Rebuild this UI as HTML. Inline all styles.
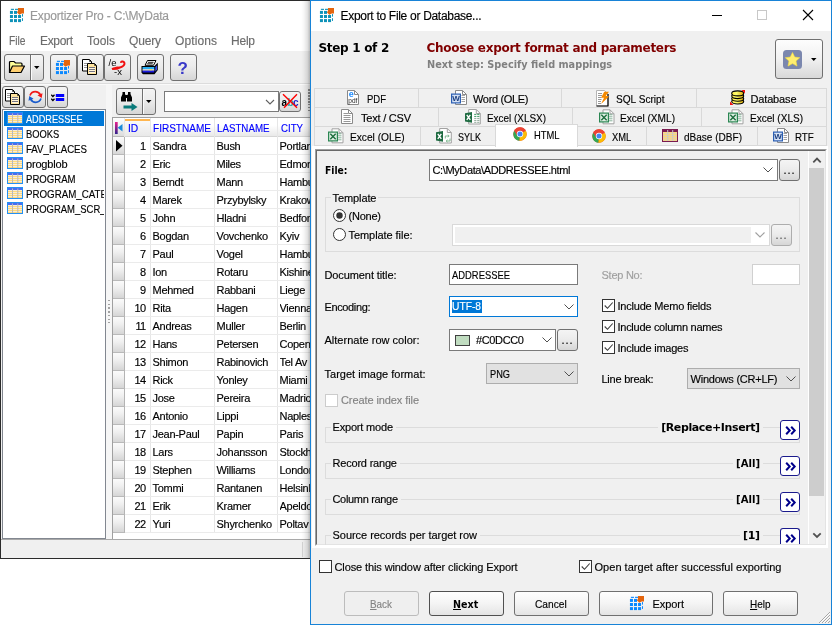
<!DOCTYPE html>
<html lang="en"><head><meta charset="utf-8"><title>Exportizer Pro - Export to File or Database</title>
<style>
html,body{margin:0;padding:0}
body{width:832px;height:625px;position:relative;overflow:hidden;background:#fff;font-family:"Liberation Sans",sans-serif;}
div,svg,span.t{position:absolute;box-sizing:border-box}
span.t{white-space:pre;display:block;-webkit-text-stroke:0.15px currentColor}
#root{left:0;top:0;width:832px;height:625px;will-change:transform;overflow:hidden}
.btn{border:1px solid #707070;border-radius:3px;background:linear-gradient(#f4f4f4,#ececec 45%,#d6d6d6 100%);}
.pbtn{border:1px solid #707070;border-radius:3px;background:linear-gradient(#fefefe,#f4f4f4 50%,#e4e4e4 100%);}
u{text-decoration:underline}
</style></head>
<body>
<div id="root">
<!-- main window -->
<div style="left:0px;top:0px;width:312px;height:559px;background:#f0f0f0;border:1px solid #2b2b2b;border-right:none;"></div>
<div style="left:1px;top:1px;width:311px;height:30px;background:#fff;"></div>
<div style="left:1px;top:31px;width:311px;height:20px;background:#fff;"></div>
<svg style="left:9px;top:8px;" width="15" height="15" viewBox="0 0 15 15"><rect x="0.95" y="2.90" width="3" height="3" fill="#0e92b8"/><rect x="5.00" y="2.90" width="3" height="3" fill="#0e92b8"/><rect x="0.95" y="7.00" width="3" height="3" fill="#0e92b8"/><rect x="5.00" y="7.00" width="3" height="3" fill="#0e92b8"/><rect x="9.05" y="7.00" width="3" height="3" fill="#0e92b8"/><rect x="0.95" y="11.10" width="3" height="3" fill="#0e92b8"/><rect x="5.00" y="11.10" width="3" height="3" fill="#0e92b8"/><rect x="9.05" y="11.10" width="3" height="3" fill="#0e92b8"/><rect x="1.900" y="0.800" width="3.100" height="1.100" fill="#0e92b8"/><rect x="6" y="0.800" width="3" height="1.100" fill="#0e92b8"/><rect x="13" y="6.100" width="1" height="2.500" fill="#0e92b8"/><rect x="13" y="10.200" width="1" height="2.700" fill="#0e92b8"/><path d="M9 0h6v5.400h-2.300l-2.300 1.400-2.400-2.400 1-1.900z" fill="#e4650e"/></svg>
<span id="t1" class="t" style="left:30px;top:7.84px;font-size:12px;line-height:16px;color:#999;font-weight:normal;letter-spacing:-0.175px;">Exportizer Pro - C:\MyData</span>
<span id="t2" class="t" style="left:8.5px;top:32.84px;font-size:12px;line-height:16px;color:#6d6d6d;font-weight:normal;letter-spacing:0.000px;transform:scaleX(0.8530);transform-origin:0 0;">File</span>
<span id="t3" class="t" style="left:40px;top:32.84px;font-size:12px;line-height:16px;color:#6d6d6d;font-weight:normal;letter-spacing:-0.338px;">Export</span>
<span id="t4" class="t" style="left:87px;top:32.84px;font-size:12px;line-height:16px;color:#6d6d6d;font-weight:normal;letter-spacing:-0.004px;">Tools</span>
<span id="t5" class="t" style="left:129px;top:32.84px;font-size:12px;line-height:16px;color:#6d6d6d;font-weight:normal;letter-spacing:-0.172px;">Query</span>
<span id="t6" class="t" style="left:175px;top:32.84px;font-size:12px;line-height:16px;color:#6d6d6d;font-weight:normal;letter-spacing:0.107px;">Options</span>
<span id="t7" class="t" style="left:231px;top:32.84px;font-size:12px;line-height:16px;color:#6d6d6d;font-weight:normal;letter-spacing:-0.229px;">Help</span>
<div class="btn" style="left:50px;top:54px;width:27px;height:27px;"></div>
<div class="btn" style="left:77px;top:54px;width:27px;height:27px;"></div>
<div class="btn" style="left:104px;top:54px;width:27px;height:27px;"></div>
<div class="btn" style="left:137px;top:54px;width:27px;height:27px;"></div>
<div class="btn" style="left:170px;top:54px;width:27px;height:27px;"></div>
<div class="btn" style="left:4px;top:54px;width:40px;height:27px;"></div>
<div style="left:30px;top:55px;width:1px;height:25px;background:#707070;"></div>
<div style="left:31px;top:55px;width:1px;height:25px;background:#fbfbfb;"></div>
<svg style="left:8px;top:60px;" width="18" height="15" viewBox="0 0 18 15"><path d="M1.5 12.5v-10q0-1 1-1h3.5l1.5 1.5h5.5q1 0 1 1v2" fill="#ffff99" stroke="#000" stroke-width="1.200"/><path d="M1.5 12.5l3-6.5h12l-3.5 6.5z" fill="#ffd070" stroke="#000" stroke-width="1.200" stroke-linejoin="round"/></svg>
<svg style="left:34px;top:66px;" width="6" height="4" viewBox="0 0 6 4"><path d="M0 0h5.5l-2.75 3z" fill="#000"/></svg>
<svg style="left:55px;top:60px;" width="15" height="15" viewBox="0 0 15 15"><rect x="0.95" y="2.90" width="3" height="3" fill="#0a88ff"/><rect x="5.00" y="2.90" width="3" height="3" fill="#0a88ff"/><rect x="0.95" y="7.00" width="3" height="3" fill="#0a88ff"/><rect x="5.00" y="7.00" width="3" height="3" fill="#0a88ff"/><rect x="9.05" y="7.00" width="3" height="3" fill="#0a88ff"/><rect x="0.95" y="11.10" width="3" height="3" fill="#0a88ff"/><rect x="5.00" y="11.10" width="3" height="3" fill="#0a88ff"/><rect x="9.05" y="11.10" width="3" height="3" fill="#0a88ff"/><rect x="1.900" y="0.800" width="3.100" height="1.100" fill="#0a88ff"/><rect x="6" y="0.800" width="3" height="1.100" fill="#0a88ff"/><rect x="13" y="6.100" width="1" height="2.500" fill="#0a88ff"/><rect x="13" y="10.200" width="1" height="2.700" fill="#0a88ff"/><path d="M9 0h6v5.400h-2.300l-2.300 1.400-2.400-2.400 1-1.900z" fill="#e4650e"/></svg>
<svg style="left:82px;top:59px;" width="16" height="17" viewBox="0 0 16 17"><path d="M0.500 0.500h7l2 2v9.500h-9z" fill="#fff" stroke="#000"/><path d="M7.300 0.500v2.200h2.200z" fill="#000"/><path d="M2 4.500h3.500M2 6.500h3.500M2 8.500h3.500" stroke="#9a9a9a"/><path d="M5.500 4.500h7l2 2v9h-9z" fill="#ffe4a0" stroke="#000"/><path d="M12.300 4.500v2.200h2.200z" fill="#000"/><path d="M7 8.500h6M7 10.500h6M7 12.500h6" stroke="#686878"/><path d="M7 9.400h6M7 11.400h6M7 13.400h6" stroke="#fff" stroke-width=".7"/></svg>
<svg style="left:108px;top:58px;" width="19" height="18" viewBox="0 0 19 18"><text x="0.500" y="8.300" font-family="Liberation Sans,sans-serif" font-size="9.500" fill="#000">/e</text><path d="M5 10.600q4 .300 7.500-1.300q3.500-1.300 4-3.300q.200-2-1.800-2.500q-1.300-.200-1.700.600" fill="none" stroke="#f01010" stroke-width="1.900" stroke-linecap="round"/><path d="M3.500 10.300l5.500-1.800 4.500.300-3.500 2.800-5.500.300z" fill="#f01010"/><text x="6" y="17" font-family="Liberation Sans,sans-serif" font-size="9.500" fill="#000">-x</text></svg>
<svg style="left:141px;top:59px;" width="18" height="16" viewBox="0 0 18 16"><path d="M6.500 1.500h8.500l-2.500 4.800h-8.500z" fill="#fff" stroke="#000" stroke-width="1"/><path d="M7 3.300h5.500M6.200 4.800h5.500" stroke="#000" stroke-width=".9"/><path d="M0.500 7h13l3.300-3.300v7.300l-3.300 4.300h-11.500l-1.500-1.500z" fill="#000"/><path d="M14.300 8l1.700-1.700v4.200l-1.700 2.200z" fill="#3a50e8"/><rect x="1.500" y="8" width="11.800" height="2.200" fill="#2aaef2"/><rect x="1.500" y="10.200" width="11.800" height="1.500" fill="#fff"/><rect x="8.500" y="10.300" width="2.500" height="1.200" fill="#ffe640"/><rect x="1.500" y="11.700" width="11.800" height="1.800" fill="#1a1ae0"/></svg>
<svg style="left:176px;top:59px;" width="14" height="17" viewBox="0 0 14 17"><text x="1.500" y="14.500" font-family="Liberation Sans,sans-serif" font-weight="bold" font-size="17" fill="#3838c8">?</text></svg>
<div style="left:1px;top:83px;width:310px;height:1px;background:#dcdcdc;"></div>
<div style="left:1px;top:84px;width:310px;height:1px;background:#fafafa;"></div>
<div class="btn" style="left:2px;top:86px;width:22px;height:22px;"></div>
<div class="btn" style="left:24px;top:86px;width:22px;height:22px;"></div>
<div class="btn" style="left:47px;top:86px;width:21px;height:22px;"></div>
<svg style="left:5px;top:89px;" width="16" height="17" viewBox="0 0 16 17"><path d="M0.500 0.500h7l2 2v9.500h-9z" fill="#fff" stroke="#000"/><path d="M7.300 0.500v2.200h2.200z" fill="#000"/><path d="M2 4.500h3.500M2 6.500h3.500M2 8.500h3.500" stroke="#9a9a9a"/><path d="M5.500 4.500h7l2 2v9h-9z" fill="#ffe4a0" stroke="#000"/><path d="M12.300 4.500v2.200h2.200z" fill="#000"/><path d="M7 8.500h6M7 10.500h6M7 12.500h6" stroke="#686878"/><path d="M7 9.400h6M7 11.400h6M7 13.400h6" stroke="#fff" stroke-width=".7"/></svg>
<svg style="left:28px;top:90px;" width="15" height="14" viewBox="0 0 15 14"><path d="M2 5.500q1.500-3.800 5.300-3.800q3.400 0 5.200 3.300" fill="none" stroke="#f01818" stroke-width="1.700"/><path d="M14.500 3.300l-.800 4.700-4.200-2.700z" fill="#f01818"/><path d="M13 8.500q-1.500 3.800-5.300 3.800q-3.400 0-5.200-3.300" fill="none" stroke="#1a5ccc" stroke-width="1.700"/><path d="M0.500 10.700l.800-4.700 4.200 2.700z" fill="#1a5ccc"/></svg>
<svg style="left:51px;top:94px;" width="14" height="8" viewBox="0 0 14 8"><path d="M0.300 0.800l1.600 1.700 1.600-1.700M0.300 4.800l1.600 1.700 1.600-1.700" fill="none" stroke="#000" stroke-width="1.300"/><rect x="4.800" y="0" width="8.400" height="3" fill="#0000ff"/><rect x="4.800" y="4" width="8.400" height="3" fill="#0000ff"/></svg>
<div style="left:2px;top:109px;width:104px;height:430px;background:#fff;border:1px solid #828790;"></div>
<div style="left:4px;top:111px;width:100px;height:15px;background:#0078d7;"></div>
<svg style="left:7px;top:112px;" width="16" height="12" viewBox="0 0 16 12"><rect x="0" y="0" width="16" height="12" fill="#2390f5"/><rect x="1" y="1" width="14" height="2" fill="#4a6cf0"/><rect x="1" y="3" width="14" height="8" fill="#f6ecd8"/><rect x="1" y="4" width="14" height="1" fill="#ffd97a"/><rect x="1" y="6" width="14" height="1" fill="#ffd97a"/><rect x="1" y="8" width="14" height="1" fill="#ffd97a"/><rect x="1" y="10" width="14" height="1" fill="#ffd97a"/><rect x="5" y="1.500" width="1" height="9.500" fill="#b9b9b9"/><rect x="10.300" y="1.500" width="1" height="9.500" fill="#b9b9b9"/></svg>
<div style="left:26px;top:111px;width:78px;height:15px;overflow:hidden;"><span id="t8" class="t" style="left:0px;top:0.69px;font-size:11px;line-height:15px;color:#fff;font-weight:normal;letter-spacing:0.000px;transform:scaleX(0.8326);transform-origin:0 0;">ADDRESSEE</span></div>
<svg style="left:7px;top:127px;" width="16" height="12" viewBox="0 0 16 12"><rect x="0" y="0" width="16" height="12" fill="#2390f5"/><rect x="1" y="1" width="14" height="2" fill="#4a6cf0"/><rect x="1" y="3" width="14" height="8" fill="#f6ecd8"/><rect x="1" y="4" width="14" height="1" fill="#ffd97a"/><rect x="1" y="6" width="14" height="1" fill="#ffd97a"/><rect x="1" y="8" width="14" height="1" fill="#ffd97a"/><rect x="1" y="10" width="14" height="1" fill="#ffd97a"/><rect x="5" y="1.500" width="1" height="9.500" fill="#b9b9b9"/><rect x="10.300" y="1.500" width="1" height="9.500" fill="#b9b9b9"/></svg>
<div style="left:26px;top:126px;width:78px;height:15px;overflow:hidden;"><span id="t9" class="t" style="left:0px;top:0.69px;font-size:11px;line-height:15px;color:#000;font-weight:normal;letter-spacing:0.000px;transform:scaleX(0.8498);transform-origin:0 0;">BOOKS</span></div>
<svg style="left:7px;top:142px;" width="16" height="12" viewBox="0 0 16 12"><rect x="0" y="0" width="16" height="12" fill="#2390f5"/><rect x="1" y="1" width="14" height="2" fill="#4a6cf0"/><rect x="1" y="3" width="14" height="8" fill="#f6ecd8"/><rect x="1" y="4" width="14" height="1" fill="#ffd97a"/><rect x="1" y="6" width="14" height="1" fill="#ffd97a"/><rect x="1" y="8" width="14" height="1" fill="#ffd97a"/><rect x="1" y="10" width="14" height="1" fill="#ffd97a"/><rect x="5" y="1.500" width="1" height="9.500" fill="#b9b9b9"/><rect x="10.300" y="1.500" width="1" height="9.500" fill="#b9b9b9"/></svg>
<div style="left:26px;top:141px;width:78px;height:15px;overflow:hidden;"><span id="t10" class="t" style="left:0px;top:0.69px;font-size:11px;line-height:15px;color:#000;font-weight:normal;letter-spacing:0.000px;transform:scaleX(0.8777);transform-origin:0 0;">FAV_PLACES</span></div>
<svg style="left:7px;top:157px;" width="16" height="12" viewBox="0 0 16 12"><rect x="0" y="0" width="16" height="12" fill="#2390f5"/><rect x="1" y="1" width="14" height="2" fill="#4a6cf0"/><rect x="1" y="3" width="14" height="8" fill="#f6ecd8"/><rect x="1" y="4" width="14" height="1" fill="#ffd97a"/><rect x="1" y="6" width="14" height="1" fill="#ffd97a"/><rect x="1" y="8" width="14" height="1" fill="#ffd97a"/><rect x="1" y="10" width="14" height="1" fill="#ffd97a"/><rect x="5" y="1.500" width="1" height="9.500" fill="#b9b9b9"/><rect x="10.300" y="1.500" width="1" height="9.500" fill="#b9b9b9"/></svg>
<div style="left:26px;top:156px;width:78px;height:15px;overflow:hidden;"><span id="t11" class="t" style="left:0px;top:0.69px;font-size:11px;line-height:15px;color:#000;font-weight:normal;letter-spacing:-0.188px;">progblob</span></div>
<svg style="left:7px;top:172px;" width="16" height="12" viewBox="0 0 16 12"><rect x="0" y="0" width="16" height="12" fill="#2390f5"/><rect x="1" y="1" width="14" height="2" fill="#4a6cf0"/><rect x="1" y="3" width="14" height="8" fill="#f6ecd8"/><rect x="1" y="4" width="14" height="1" fill="#ffd97a"/><rect x="1" y="6" width="14" height="1" fill="#ffd97a"/><rect x="1" y="8" width="14" height="1" fill="#ffd97a"/><rect x="1" y="10" width="14" height="1" fill="#ffd97a"/><rect x="5" y="1.500" width="1" height="9.500" fill="#b9b9b9"/><rect x="10.300" y="1.500" width="1" height="9.500" fill="#b9b9b9"/></svg>
<div style="left:26px;top:171px;width:78px;height:15px;overflow:hidden;"><span id="t12" class="t" style="left:0px;top:0.69px;font-size:11px;line-height:15px;color:#000;font-weight:normal;letter-spacing:0.000px;transform:scaleX(0.8708);transform-origin:0 0;">PROGRAM</span></div>
<svg style="left:7px;top:187px;" width="16" height="12" viewBox="0 0 16 12"><rect x="0" y="0" width="16" height="12" fill="#2390f5"/><rect x="1" y="1" width="14" height="2" fill="#4a6cf0"/><rect x="1" y="3" width="14" height="8" fill="#f6ecd8"/><rect x="1" y="4" width="14" height="1" fill="#ffd97a"/><rect x="1" y="6" width="14" height="1" fill="#ffd97a"/><rect x="1" y="8" width="14" height="1" fill="#ffd97a"/><rect x="1" y="10" width="14" height="1" fill="#ffd97a"/><rect x="5" y="1.500" width="1" height="9.500" fill="#b9b9b9"/><rect x="10.300" y="1.500" width="1" height="9.500" fill="#b9b9b9"/></svg>
<div style="left:26px;top:186px;width:78px;height:15px;overflow:hidden;"><span id="t13" class="t" style="left:0px;top:0.69px;font-size:11px;line-height:15px;color:#000;font-weight:normal;letter-spacing:0.000px;transform:scaleX(0.8854);transform-origin:0 0;">PROGRAM_CATE</span></div>
<svg style="left:7px;top:202px;" width="16" height="12" viewBox="0 0 16 12"><rect x="0" y="0" width="16" height="12" fill="#2390f5"/><rect x="1" y="1" width="14" height="2" fill="#4a6cf0"/><rect x="1" y="3" width="14" height="8" fill="#f6ecd8"/><rect x="1" y="4" width="14" height="1" fill="#ffd97a"/><rect x="1" y="6" width="14" height="1" fill="#ffd97a"/><rect x="1" y="8" width="14" height="1" fill="#ffd97a"/><rect x="1" y="10" width="14" height="1" fill="#ffd97a"/><rect x="5" y="1.500" width="1" height="9.500" fill="#b9b9b9"/><rect x="10.300" y="1.500" width="1" height="9.500" fill="#b9b9b9"/></svg>
<div style="left:26px;top:201px;width:78px;height:15px;overflow:hidden;"><span id="t14" class="t" style="left:0px;top:0.69px;font-size:11px;line-height:15px;color:#000;font-weight:normal;letter-spacing:0.000px;transform:scaleX(0.8614);transform-origin:0 0;">PROGRAM_SCR_</span></div>
<div style="left:106px;top:85px;width:6px;height:454px;background:#f6f6f6;"></div>
<div style="left:108px;top:300px;width:2px;height:23px;background:repeating-linear-gradient(#a2a2a2 0 1.500px,#f6f6f6 1.500px 3.700px);"></div>
<div class="btn" style="left:116px;top:88px;width:40px;height:27px;"></div>
<div style="left:142px;top:89px;width:1px;height:25px;background:#707070;"></div>
<div style="left:143px;top:89px;width:1px;height:25px;background:#fbfbfb;"></div>
<div style="left:164px;top:91px;width:115px;height:21px;background:#fff;border:1px solid #7a7a7a;"></div>
<div class="btn" style="left:279px;top:91px;width:22px;height:21px;"></div>
<svg style="left:120px;top:91px;" width="13" height="11" viewBox="0 0 13 11"><path d="M1 10.500v-4l1.500-3.500v-2h2.500v2l1 2v5.500z" fill="#000"/><path d="M12 10.500v-4l-1.500-3.500v-2h-2.500v2l-1 2v5.500z" fill="#000"/><rect x="5" y="4" width="3" height="3" fill="#000"/></svg>
<svg style="left:123px;top:103px;" width="15" height="8" viewBox="0 0 15 8"><path d="M0.500 2.500h8v-2.500l6 4-6 4v-2.500h-8z" fill="#0a7a7a"/></svg>
<svg style="left:146px;top:100px;" width="6" height="4" viewBox="0 0 6 4"><path d="M0 0h5.500l-2.750 3z" fill="#000"/></svg>
<svg style="left:264px;top:96px;" width="12" height="12" viewBox="0 0 12 12"><path d="M2 4l4 4 4-4" stroke="#606060" stroke-width="1.1" fill="none"/></svg>
<svg style="left:281px;top:93px;" width="18" height="17" viewBox="0 0 18 17"><text x="0.500" y="12.500" font-family="Liberation Sans,sans-serif" font-weight="bold" font-size="10" fill="#000">a</text><text x="6.500" y="12.500" font-family="Liberation Sans,sans-serif" font-weight="bold" font-size="10" fill="#2aa">b</text><text x="12" y="12.500" font-family="Liberation Sans,sans-serif" font-weight="bold" font-size="10" fill="#22c">c</text><path d="M2 1.200l14 13.500M16 1.200l-13 13.500" stroke="#ff0000" stroke-width="1.400"/></svg>
<div style="left:112px;top:117px;width:200px;height:422px;background:#fff;border-left:1px solid #a0a0a0;border-top:1px solid #a0a0a0;"></div>
<div style="left:113px;top:118px;width:199px;height:19px;background:linear-gradient(#fff,#fff 40%,#e9e9e9);border-bottom:1px solid #d5d5d5;"></div>
<div style="left:125px;top:119px;width:25px;height:17px;background:linear-gradient(#fbfbfb,#e9e9e9);"></div>
<div style="left:113px;top:118px;width:12px;height:19px;background:linear-gradient(#fdfdfd,#f2f2f2 40%,#dcdcdc);border-right:1px solid #b4b4b4;border-bottom:1px solid #b9b9b9;"></div>
<div style="left:125px;top:119px;width:25px;height:2px;background:#ffb650;"></div>
<div style="left:124px;top:118px;width:1px;height:415px;background:#e6e6e6;"></div>
<div style="left:150px;top:118px;width:1px;height:415px;background:#e6e6e6;"></div>
<div style="left:214px;top:118px;width:1px;height:415px;background:#e6e6e6;"></div>
<div style="left:277px;top:118px;width:1px;height:415px;background:#e6e6e6;"></div>
<span id="t15" class="t" style="left:128px;top:120.69px;font-size:11px;line-height:15px;color:#0000ff;font-weight:normal;letter-spacing:0.000px;transform:scaleX(0.9318);transform-origin:0 0;">ID</span>
<span id="t16" class="t" style="left:153px;top:120.69px;font-size:11px;line-height:15px;color:#0000ff;font-weight:normal;letter-spacing:0.000px;transform:scaleX(0.9125);transform-origin:0 0;">FIRSTNAME</span>
<span id="t17" class="t" style="left:217px;top:120.69px;font-size:11px;line-height:15px;color:#0000ff;font-weight:normal;letter-spacing:0.000px;transform:scaleX(0.8854);transform-origin:0 0;">LASTNAME</span>
<span id="t18" class="t" style="left:280.5px;top:120.69px;font-size:11px;line-height:15px;color:#0000ff;font-weight:normal;letter-spacing:0.000px;transform:scaleX(0.8778);transform-origin:0 0;">CITY</span>
<div style="left:113px;top:154px;width:199px;height:1px;background:#ebebeb;"></div>
<div style="left:113px;top:137px;width:12px;height:18px;background:linear-gradient(#fbfbfb,#f0f0f0 40%,#d6d6d6);border-right:1px solid #b4b4b4;border-bottom:1px solid #b9b9b9;"></div>
<span id="t19" class="t" style="right:686.4px;top:138.99px;font-size:11px;line-height:15px;color:#000;font-weight:normal;letter-spacing:-0.6px;">1</span>
<span id="t20" class="t" style="left:152.5px;top:138.99px;font-size:11px;line-height:15px;color:#000;font-weight:normal;letter-spacing:-0.28px;">Sandra</span>
<span id="t21" class="t" style="left:216.5px;top:138.99px;font-size:11px;line-height:15px;color:#000;font-weight:normal;letter-spacing:-0.28px;">Bush</span>
<div style="left:279.5px;top:137px;width:30.5px;height:17px;overflow:hidden;"><span id="t22" class="t" style="left:0px;top:1.99px;font-size:11px;line-height:15px;color:#000;font-weight:normal;letter-spacing:-0.28px;">Portlan</span></div>
<div style="left:113px;top:172px;width:199px;height:1px;background:#ebebeb;"></div>
<div style="left:113px;top:155px;width:12px;height:18px;background:linear-gradient(#fbfbfb,#f0f0f0 40%,#d6d6d6);border-right:1px solid #b4b4b4;border-bottom:1px solid #b9b9b9;"></div>
<span id="t23" class="t" style="right:686.4px;top:156.99px;font-size:11px;line-height:15px;color:#000;font-weight:normal;letter-spacing:-0.6px;">2</span>
<span id="t24" class="t" style="left:152.5px;top:156.99px;font-size:11px;line-height:15px;color:#000;font-weight:normal;letter-spacing:-0.28px;">Eric</span>
<span id="t25" class="t" style="left:216.5px;top:156.99px;font-size:11px;line-height:15px;color:#000;font-weight:normal;letter-spacing:-0.28px;">Miles</span>
<div style="left:279.5px;top:155px;width:30.5px;height:17px;overflow:hidden;"><span id="t26" class="t" style="left:0px;top:1.99px;font-size:11px;line-height:15px;color:#000;font-weight:normal;letter-spacing:-0.28px;">Edmon</span></div>
<div style="left:113px;top:190px;width:199px;height:1px;background:#ebebeb;"></div>
<div style="left:113px;top:173px;width:12px;height:18px;background:linear-gradient(#fbfbfb,#f0f0f0 40%,#d6d6d6);border-right:1px solid #b4b4b4;border-bottom:1px solid #b9b9b9;"></div>
<span id="t27" class="t" style="right:686.4px;top:174.99px;font-size:11px;line-height:15px;color:#000;font-weight:normal;letter-spacing:-0.6px;">3</span>
<span id="t28" class="t" style="left:152.5px;top:174.99px;font-size:11px;line-height:15px;color:#000;font-weight:normal;letter-spacing:-0.28px;">Berndt</span>
<span id="t29" class="t" style="left:216.5px;top:174.99px;font-size:11px;line-height:15px;color:#000;font-weight:normal;letter-spacing:-0.28px;">Mann</span>
<div style="left:279.5px;top:173px;width:30.5px;height:17px;overflow:hidden;"><span id="t30" class="t" style="left:0px;top:1.99px;font-size:11px;line-height:15px;color:#000;font-weight:normal;letter-spacing:-0.28px;">Hambu</span></div>
<div style="left:113px;top:208px;width:199px;height:1px;background:#ebebeb;"></div>
<div style="left:113px;top:191px;width:12px;height:18px;background:linear-gradient(#fbfbfb,#f0f0f0 40%,#d6d6d6);border-right:1px solid #b4b4b4;border-bottom:1px solid #b9b9b9;"></div>
<span id="t31" class="t" style="right:686.4px;top:192.99px;font-size:11px;line-height:15px;color:#000;font-weight:normal;letter-spacing:-0.6px;">4</span>
<span id="t32" class="t" style="left:152.5px;top:192.99px;font-size:11px;line-height:15px;color:#000;font-weight:normal;letter-spacing:-0.28px;">Marek</span>
<span id="t33" class="t" style="left:216.5px;top:192.99px;font-size:11px;line-height:15px;color:#000;font-weight:normal;letter-spacing:-0.28px;">Przybylsky</span>
<div style="left:279.5px;top:191px;width:30.5px;height:17px;overflow:hidden;"><span id="t34" class="t" style="left:0px;top:1.99px;font-size:11px;line-height:15px;color:#000;font-weight:normal;letter-spacing:-0.28px;">Krakow</span></div>
<div style="left:113px;top:226px;width:199px;height:1px;background:#ebebeb;"></div>
<div style="left:113px;top:209px;width:12px;height:18px;background:linear-gradient(#fbfbfb,#f0f0f0 40%,#d6d6d6);border-right:1px solid #b4b4b4;border-bottom:1px solid #b9b9b9;"></div>
<span id="t35" class="t" style="right:686.4px;top:210.99px;font-size:11px;line-height:15px;color:#000;font-weight:normal;letter-spacing:-0.6px;">5</span>
<span id="t36" class="t" style="left:152.5px;top:210.99px;font-size:11px;line-height:15px;color:#000;font-weight:normal;letter-spacing:-0.28px;">John</span>
<span id="t37" class="t" style="left:216.5px;top:210.99px;font-size:11px;line-height:15px;color:#000;font-weight:normal;letter-spacing:-0.28px;">Hladni</span>
<div style="left:279.5px;top:209px;width:30.5px;height:17px;overflow:hidden;"><span id="t38" class="t" style="left:0px;top:1.99px;font-size:11px;line-height:15px;color:#000;font-weight:normal;letter-spacing:-0.28px;">Bedfor</span></div>
<div style="left:113px;top:244px;width:199px;height:1px;background:#ebebeb;"></div>
<div style="left:113px;top:227px;width:12px;height:18px;background:linear-gradient(#fbfbfb,#f0f0f0 40%,#d6d6d6);border-right:1px solid #b4b4b4;border-bottom:1px solid #b9b9b9;"></div>
<span id="t39" class="t" style="right:686.4px;top:228.99px;font-size:11px;line-height:15px;color:#000;font-weight:normal;letter-spacing:-0.6px;">6</span>
<span id="t40" class="t" style="left:152.5px;top:228.99px;font-size:11px;line-height:15px;color:#000;font-weight:normal;letter-spacing:-0.28px;">Bogdan</span>
<span id="t41" class="t" style="left:216.5px;top:228.99px;font-size:11px;line-height:15px;color:#000;font-weight:normal;letter-spacing:-0.28px;">Vovchenko</span>
<div style="left:279.5px;top:227px;width:30.5px;height:17px;overflow:hidden;"><span id="t42" class="t" style="left:0px;top:1.99px;font-size:11px;line-height:15px;color:#000;font-weight:normal;letter-spacing:-0.28px;">Kyiv</span></div>
<div style="left:113px;top:262px;width:199px;height:1px;background:#ebebeb;"></div>
<div style="left:113px;top:245px;width:12px;height:18px;background:linear-gradient(#fbfbfb,#f0f0f0 40%,#d6d6d6);border-right:1px solid #b4b4b4;border-bottom:1px solid #b9b9b9;"></div>
<span id="t43" class="t" style="right:686.4px;top:246.99px;font-size:11px;line-height:15px;color:#000;font-weight:normal;letter-spacing:-0.6px;">7</span>
<span id="t44" class="t" style="left:152.5px;top:246.99px;font-size:11px;line-height:15px;color:#000;font-weight:normal;letter-spacing:-0.28px;">Paul</span>
<span id="t45" class="t" style="left:216.5px;top:246.99px;font-size:11px;line-height:15px;color:#000;font-weight:normal;letter-spacing:-0.28px;">Vogel</span>
<div style="left:279.5px;top:245px;width:30.5px;height:17px;overflow:hidden;"><span id="t46" class="t" style="left:0px;top:1.99px;font-size:11px;line-height:15px;color:#000;font-weight:normal;letter-spacing:-0.28px;">Hambu</span></div>
<div style="left:113px;top:280px;width:199px;height:1px;background:#ebebeb;"></div>
<div style="left:113px;top:263px;width:12px;height:18px;background:linear-gradient(#fbfbfb,#f0f0f0 40%,#d6d6d6);border-right:1px solid #b4b4b4;border-bottom:1px solid #b9b9b9;"></div>
<span id="t47" class="t" style="right:686.4px;top:264.99px;font-size:11px;line-height:15px;color:#000;font-weight:normal;letter-spacing:-0.6px;">8</span>
<span id="t48" class="t" style="left:152.5px;top:264.99px;font-size:11px;line-height:15px;color:#000;font-weight:normal;letter-spacing:-0.28px;">Ion</span>
<span id="t49" class="t" style="left:216.5px;top:264.99px;font-size:11px;line-height:15px;color:#000;font-weight:normal;letter-spacing:-0.28px;">Rotaru</span>
<div style="left:279.5px;top:263px;width:30.5px;height:17px;overflow:hidden;"><span id="t50" class="t" style="left:0px;top:1.99px;font-size:11px;line-height:15px;color:#000;font-weight:normal;letter-spacing:-0.28px;">Kishine</span></div>
<div style="left:113px;top:298px;width:199px;height:1px;background:#ebebeb;"></div>
<div style="left:113px;top:281px;width:12px;height:18px;background:linear-gradient(#fbfbfb,#f0f0f0 40%,#d6d6d6);border-right:1px solid #b4b4b4;border-bottom:1px solid #b9b9b9;"></div>
<span id="t51" class="t" style="right:686.4px;top:282.99px;font-size:11px;line-height:15px;color:#000;font-weight:normal;letter-spacing:-0.6px;">9</span>
<span id="t52" class="t" style="left:152.5px;top:282.99px;font-size:11px;line-height:15px;color:#000;font-weight:normal;letter-spacing:-0.28px;">Mehmed</span>
<span id="t53" class="t" style="left:216.5px;top:282.99px;font-size:11px;line-height:15px;color:#000;font-weight:normal;letter-spacing:-0.28px;">Rabbani</span>
<div style="left:279.5px;top:281px;width:30.5px;height:17px;overflow:hidden;"><span id="t54" class="t" style="left:0px;top:1.99px;font-size:11px;line-height:15px;color:#000;font-weight:normal;letter-spacing:-0.28px;">Liege</span></div>
<div style="left:113px;top:316px;width:199px;height:1px;background:#ebebeb;"></div>
<div style="left:113px;top:299px;width:12px;height:18px;background:linear-gradient(#fbfbfb,#f0f0f0 40%,#d6d6d6);border-right:1px solid #b4b4b4;border-bottom:1px solid #b9b9b9;"></div>
<span id="t55" class="t" style="right:686.4px;top:300.99px;font-size:11px;line-height:15px;color:#000;font-weight:normal;letter-spacing:-0.6px;">10</span>
<span id="t56" class="t" style="left:152.5px;top:300.99px;font-size:11px;line-height:15px;color:#000;font-weight:normal;letter-spacing:-0.28px;">Rita</span>
<span id="t57" class="t" style="left:216.5px;top:300.99px;font-size:11px;line-height:15px;color:#000;font-weight:normal;letter-spacing:-0.28px;">Hagen</span>
<div style="left:279.5px;top:299px;width:30.5px;height:17px;overflow:hidden;"><span id="t58" class="t" style="left:0px;top:1.99px;font-size:11px;line-height:15px;color:#000;font-weight:normal;letter-spacing:-0.28px;">Vienna</span></div>
<div style="left:113px;top:334px;width:199px;height:1px;background:#ebebeb;"></div>
<div style="left:113px;top:317px;width:12px;height:18px;background:linear-gradient(#fbfbfb,#f0f0f0 40%,#d6d6d6);border-right:1px solid #b4b4b4;border-bottom:1px solid #b9b9b9;"></div>
<span id="t59" class="t" style="right:686.4px;top:318.99px;font-size:11px;line-height:15px;color:#000;font-weight:normal;letter-spacing:-0.6px;">11</span>
<span id="t60" class="t" style="left:152.5px;top:318.99px;font-size:11px;line-height:15px;color:#000;font-weight:normal;letter-spacing:-0.28px;">Andreas</span>
<span id="t61" class="t" style="left:216.5px;top:318.99px;font-size:11px;line-height:15px;color:#000;font-weight:normal;letter-spacing:-0.28px;">Muller</span>
<div style="left:279.5px;top:317px;width:30.5px;height:17px;overflow:hidden;"><span id="t62" class="t" style="left:0px;top:1.99px;font-size:11px;line-height:15px;color:#000;font-weight:normal;letter-spacing:-0.28px;">Berlin</span></div>
<div style="left:113px;top:352px;width:199px;height:1px;background:#ebebeb;"></div>
<div style="left:113px;top:335px;width:12px;height:18px;background:linear-gradient(#fbfbfb,#f0f0f0 40%,#d6d6d6);border-right:1px solid #b4b4b4;border-bottom:1px solid #b9b9b9;"></div>
<span id="t63" class="t" style="right:686.4px;top:336.99px;font-size:11px;line-height:15px;color:#000;font-weight:normal;letter-spacing:-0.6px;">12</span>
<span id="t64" class="t" style="left:152.5px;top:336.99px;font-size:11px;line-height:15px;color:#000;font-weight:normal;letter-spacing:-0.28px;">Hans</span>
<span id="t65" class="t" style="left:216.5px;top:336.99px;font-size:11px;line-height:15px;color:#000;font-weight:normal;letter-spacing:-0.28px;">Petersen</span>
<div style="left:279.5px;top:335px;width:30.5px;height:17px;overflow:hidden;"><span id="t66" class="t" style="left:0px;top:1.99px;font-size:11px;line-height:15px;color:#000;font-weight:normal;letter-spacing:-0.28px;">Copen</span></div>
<div style="left:113px;top:370px;width:199px;height:1px;background:#ebebeb;"></div>
<div style="left:113px;top:353px;width:12px;height:18px;background:linear-gradient(#fbfbfb,#f0f0f0 40%,#d6d6d6);border-right:1px solid #b4b4b4;border-bottom:1px solid #b9b9b9;"></div>
<span id="t67" class="t" style="right:686.4px;top:354.99px;font-size:11px;line-height:15px;color:#000;font-weight:normal;letter-spacing:-0.6px;">13</span>
<span id="t68" class="t" style="left:152.5px;top:354.99px;font-size:11px;line-height:15px;color:#000;font-weight:normal;letter-spacing:-0.28px;">Shimon</span>
<span id="t69" class="t" style="left:216.5px;top:354.99px;font-size:11px;line-height:15px;color:#000;font-weight:normal;letter-spacing:-0.28px;">Rabinovich</span>
<div style="left:279.5px;top:353px;width:30.5px;height:17px;overflow:hidden;"><span id="t70" class="t" style="left:0px;top:1.99px;font-size:11px;line-height:15px;color:#000;font-weight:normal;letter-spacing:-0.28px;">Tel Av</span></div>
<div style="left:113px;top:388px;width:199px;height:1px;background:#ebebeb;"></div>
<div style="left:113px;top:371px;width:12px;height:18px;background:linear-gradient(#fbfbfb,#f0f0f0 40%,#d6d6d6);border-right:1px solid #b4b4b4;border-bottom:1px solid #b9b9b9;"></div>
<span id="t71" class="t" style="right:686.4px;top:372.99px;font-size:11px;line-height:15px;color:#000;font-weight:normal;letter-spacing:-0.6px;">14</span>
<span id="t72" class="t" style="left:152.5px;top:372.99px;font-size:11px;line-height:15px;color:#000;font-weight:normal;letter-spacing:-0.28px;">Rick</span>
<span id="t73" class="t" style="left:216.5px;top:372.99px;font-size:11px;line-height:15px;color:#000;font-weight:normal;letter-spacing:-0.28px;">Yonley</span>
<div style="left:279.5px;top:371px;width:30.5px;height:17px;overflow:hidden;"><span id="t74" class="t" style="left:0px;top:1.99px;font-size:11px;line-height:15px;color:#000;font-weight:normal;letter-spacing:-0.28px;">Miami</span></div>
<div style="left:113px;top:406px;width:199px;height:1px;background:#ebebeb;"></div>
<div style="left:113px;top:389px;width:12px;height:18px;background:linear-gradient(#fbfbfb,#f0f0f0 40%,#d6d6d6);border-right:1px solid #b4b4b4;border-bottom:1px solid #b9b9b9;"></div>
<span id="t75" class="t" style="right:686.4px;top:390.99px;font-size:11px;line-height:15px;color:#000;font-weight:normal;letter-spacing:-0.6px;">15</span>
<span id="t76" class="t" style="left:152.5px;top:390.99px;font-size:11px;line-height:15px;color:#000;font-weight:normal;letter-spacing:-0.28px;">Jose</span>
<span id="t77" class="t" style="left:216.5px;top:390.99px;font-size:11px;line-height:15px;color:#000;font-weight:normal;letter-spacing:-0.28px;">Pereira</span>
<div style="left:279.5px;top:389px;width:30.5px;height:17px;overflow:hidden;"><span id="t78" class="t" style="left:0px;top:1.99px;font-size:11px;line-height:15px;color:#000;font-weight:normal;letter-spacing:-0.28px;">Madric</span></div>
<div style="left:113px;top:424px;width:199px;height:1px;background:#ebebeb;"></div>
<div style="left:113px;top:407px;width:12px;height:18px;background:linear-gradient(#fbfbfb,#f0f0f0 40%,#d6d6d6);border-right:1px solid #b4b4b4;border-bottom:1px solid #b9b9b9;"></div>
<span id="t79" class="t" style="right:686.4px;top:408.99px;font-size:11px;line-height:15px;color:#000;font-weight:normal;letter-spacing:-0.6px;">16</span>
<span id="t80" class="t" style="left:152.5px;top:408.99px;font-size:11px;line-height:15px;color:#000;font-weight:normal;letter-spacing:-0.28px;">Antonio</span>
<span id="t81" class="t" style="left:216.5px;top:408.99px;font-size:11px;line-height:15px;color:#000;font-weight:normal;letter-spacing:-0.28px;">Lippi</span>
<div style="left:279.5px;top:407px;width:30.5px;height:17px;overflow:hidden;"><span id="t82" class="t" style="left:0px;top:1.99px;font-size:11px;line-height:15px;color:#000;font-weight:normal;letter-spacing:-0.28px;">Naples</span></div>
<div style="left:113px;top:442px;width:199px;height:1px;background:#ebebeb;"></div>
<div style="left:113px;top:425px;width:12px;height:18px;background:linear-gradient(#fbfbfb,#f0f0f0 40%,#d6d6d6);border-right:1px solid #b4b4b4;border-bottom:1px solid #b9b9b9;"></div>
<span id="t83" class="t" style="right:686.4px;top:426.99px;font-size:11px;line-height:15px;color:#000;font-weight:normal;letter-spacing:-0.6px;">17</span>
<span id="t84" class="t" style="left:152.5px;top:426.99px;font-size:11px;line-height:15px;color:#000;font-weight:normal;letter-spacing:-0.28px;">Jean-Paul</span>
<span id="t85" class="t" style="left:216.5px;top:426.99px;font-size:11px;line-height:15px;color:#000;font-weight:normal;letter-spacing:-0.28px;">Papin</span>
<div style="left:279.5px;top:425px;width:30.5px;height:17px;overflow:hidden;"><span id="t86" class="t" style="left:0px;top:1.99px;font-size:11px;line-height:15px;color:#000;font-weight:normal;letter-spacing:-0.28px;">Paris</span></div>
<div style="left:113px;top:460px;width:199px;height:1px;background:#ebebeb;"></div>
<div style="left:113px;top:443px;width:12px;height:18px;background:linear-gradient(#fbfbfb,#f0f0f0 40%,#d6d6d6);border-right:1px solid #b4b4b4;border-bottom:1px solid #b9b9b9;"></div>
<span id="t87" class="t" style="right:686.4px;top:444.99px;font-size:11px;line-height:15px;color:#000;font-weight:normal;letter-spacing:-0.6px;">18</span>
<span id="t88" class="t" style="left:152.5px;top:444.99px;font-size:11px;line-height:15px;color:#000;font-weight:normal;letter-spacing:-0.28px;">Lars</span>
<span id="t89" class="t" style="left:216.5px;top:444.99px;font-size:11px;line-height:15px;color:#000;font-weight:normal;letter-spacing:-0.28px;">Johansson</span>
<div style="left:279.5px;top:443px;width:30.5px;height:17px;overflow:hidden;"><span id="t90" class="t" style="left:0px;top:1.99px;font-size:11px;line-height:15px;color:#000;font-weight:normal;letter-spacing:-0.28px;">Stockh</span></div>
<div style="left:113px;top:478px;width:199px;height:1px;background:#ebebeb;"></div>
<div style="left:113px;top:461px;width:12px;height:18px;background:linear-gradient(#fbfbfb,#f0f0f0 40%,#d6d6d6);border-right:1px solid #b4b4b4;border-bottom:1px solid #b9b9b9;"></div>
<span id="t91" class="t" style="right:686.4px;top:462.99px;font-size:11px;line-height:15px;color:#000;font-weight:normal;letter-spacing:-0.6px;">19</span>
<span id="t92" class="t" style="left:152.5px;top:462.99px;font-size:11px;line-height:15px;color:#000;font-weight:normal;letter-spacing:-0.28px;">Stephen</span>
<span id="t93" class="t" style="left:216.5px;top:462.99px;font-size:11px;line-height:15px;color:#000;font-weight:normal;letter-spacing:-0.28px;">Williams</span>
<div style="left:279.5px;top:461px;width:30.5px;height:17px;overflow:hidden;"><span id="t94" class="t" style="left:0px;top:1.99px;font-size:11px;line-height:15px;color:#000;font-weight:normal;letter-spacing:-0.28px;">Londor</span></div>
<div style="left:113px;top:496px;width:199px;height:1px;background:#ebebeb;"></div>
<div style="left:113px;top:479px;width:12px;height:18px;background:linear-gradient(#fbfbfb,#f0f0f0 40%,#d6d6d6);border-right:1px solid #b4b4b4;border-bottom:1px solid #b9b9b9;"></div>
<span id="t95" class="t" style="right:686.4px;top:480.99px;font-size:11px;line-height:15px;color:#000;font-weight:normal;letter-spacing:-0.6px;">20</span>
<span id="t96" class="t" style="left:152.5px;top:480.99px;font-size:11px;line-height:15px;color:#000;font-weight:normal;letter-spacing:-0.28px;">Tommi</span>
<span id="t97" class="t" style="left:216.5px;top:480.99px;font-size:11px;line-height:15px;color:#000;font-weight:normal;letter-spacing:-0.28px;">Rantanen</span>
<div style="left:279.5px;top:479px;width:30.5px;height:17px;overflow:hidden;"><span id="t98" class="t" style="left:0px;top:1.99px;font-size:11px;line-height:15px;color:#000;font-weight:normal;letter-spacing:-0.28px;">Helsink</span></div>
<div style="left:113px;top:514px;width:199px;height:1px;background:#ebebeb;"></div>
<div style="left:113px;top:497px;width:12px;height:18px;background:linear-gradient(#fbfbfb,#f0f0f0 40%,#d6d6d6);border-right:1px solid #b4b4b4;border-bottom:1px solid #b9b9b9;"></div>
<span id="t99" class="t" style="right:686.4px;top:498.99px;font-size:11px;line-height:15px;color:#000;font-weight:normal;letter-spacing:-0.6px;">21</span>
<span id="t100" class="t" style="left:152.5px;top:498.99px;font-size:11px;line-height:15px;color:#000;font-weight:normal;letter-spacing:-0.28px;">Erik</span>
<span id="t101" class="t" style="left:216.5px;top:498.99px;font-size:11px;line-height:15px;color:#000;font-weight:normal;letter-spacing:-0.28px;">Kramer</span>
<div style="left:279.5px;top:497px;width:30.5px;height:17px;overflow:hidden;"><span id="t102" class="t" style="left:0px;top:1.99px;font-size:11px;line-height:15px;color:#000;font-weight:normal;letter-spacing:-0.28px;">Apeldo</span></div>
<div style="left:113px;top:532px;width:199px;height:1px;background:#ebebeb;"></div>
<div style="left:113px;top:515px;width:12px;height:18px;background:linear-gradient(#fbfbfb,#f0f0f0 40%,#d6d6d6);border-right:1px solid #b4b4b4;border-bottom:1px solid #b9b9b9;"></div>
<span id="t103" class="t" style="right:686.4px;top:516.99px;font-size:11px;line-height:15px;color:#000;font-weight:normal;letter-spacing:-0.6px;">22</span>
<span id="t104" class="t" style="left:152.5px;top:516.99px;font-size:11px;line-height:15px;color:#000;font-weight:normal;letter-spacing:-0.28px;">Yuri</span>
<span id="t105" class="t" style="left:216.5px;top:516.99px;font-size:11px;line-height:15px;color:#000;font-weight:normal;letter-spacing:-0.28px;">Shyrchenko</span>
<div style="left:279.5px;top:515px;width:30.5px;height:17px;overflow:hidden;"><span id="t106" class="t" style="left:0px;top:1.99px;font-size:11px;line-height:15px;color:#000;font-weight:normal;letter-spacing:-0.28px;">Poltav</span></div>
<svg style="left:115px;top:122px;" width="8" height="12" viewBox="0 0 8 12"><defs><linearGradient id="kg" x1="0" y1="0" x2="0" y2="1"><stop offset="0" stop-color="#e8208c"/><stop offset="1" stop-color="#30208c"/></linearGradient></defs><rect x="0" y="0" width="2.700" height="12" fill="url(#kg)"/><path d="M7.500 2v7.500l-4.800-3.750z" fill="#1a8ad8"/></svg>
<svg style="left:116px;top:140px;" width="7" height="12" viewBox="0 0 7 12"><path d="M0 0l6.500 5.700-6.500 5.700z" fill="#000"/></svg>
<div style="left:308px;top:89px;width:2px;height:22px;background:repeating-linear-gradient(#8c8c8c 0 1.500px,rgba(0,0,0,0) 1.500px 3px);"></div>
<div style="left:1px;top:539px;width:311px;height:1px;background:#a9a9a9;"></div>
<div style="left:302px;top:542px;width:1px;height:15px;background:#d4d4d4;"></div>
<div style="left:301px;top:1px;width:9px;height:557px;background:linear-gradient(90deg,rgba(0,0,0,0),rgba(0,0,0,.03) 30%,rgba(0,0,0,.11) 70%,rgba(0,0,0,.27));"></div>
<!-- dialog -->
<div style="left:310px;top:0px;width:522px;height:625px;background:#f0f0f0;border:1px solid #1883d7;"></div>
<div style="left:311px;top:1px;width:520px;height:30px;background:#fff;"></div>
<svg style="left:319px;top:8px;" width="15" height="15" viewBox="0 0 15 15"><rect x="0.95" y="2.90" width="3" height="3" fill="#0e92b8"/><rect x="5.00" y="2.90" width="3" height="3" fill="#0e92b8"/><rect x="0.95" y="7.00" width="3" height="3" fill="#0e92b8"/><rect x="5.00" y="7.00" width="3" height="3" fill="#0e92b8"/><rect x="9.05" y="7.00" width="3" height="3" fill="#0e92b8"/><rect x="0.95" y="11.10" width="3" height="3" fill="#0e92b8"/><rect x="5.00" y="11.10" width="3" height="3" fill="#0e92b8"/><rect x="9.05" y="11.10" width="3" height="3" fill="#0e92b8"/><rect x="1.900" y="0.800" width="3.100" height="1.100" fill="#0e92b8"/><rect x="6" y="0.800" width="3" height="1.100" fill="#0e92b8"/><rect x="13" y="6.100" width="1" height="2.500" fill="#0e92b8"/><rect x="13" y="10.200" width="1" height="2.700" fill="#0e92b8"/><path d="M9 0h6v5.400h-2.300l-2.300 1.400-2.400-2.400 1-1.900z" fill="#e4650e"/></svg>
<span id="t107" class="t" style="left:340.5px;top:7.84px;font-size:12px;line-height:16px;color:#000;font-weight:normal;letter-spacing:-0.300px;">Export to File or Database...</span>
<svg style="left:700px;top:0px;" width="131" height="31" viewBox="0 0 131 31"><path d="M12 15.5h10" stroke="#000" stroke-width="1"/><rect x="57.5" y="10.5" width="9" height="9" fill="none" stroke="#c8c8c8"/><path d="M103 10l10 10M113 10l-10 10" stroke="#000" stroke-width="1.1" fill="none"/></svg>
<span id="t108" class="t" style="left:318.5px;top:39.60px;font-size:12px;line-height:16px;color:#000;font-weight:bold;-webkit-text-stroke:0;font-family:'DejaVu Sans','Liberation Sans',sans-serif;letter-spacing:-0.307px;">Step 1 of 2</span>
<span id="t109" class="t" style="left:426.5px;top:39.60px;font-size:12px;line-height:16px;color:#800000;font-weight:bold;-webkit-text-stroke:0;font-family:'DejaVu Sans','Liberation Sans',sans-serif;letter-spacing:-0.277px;">Choose export format and parameters</span>
<span id="t110" class="t" style="left:426.5px;top:57.12px;font-size:10.5px;line-height:14.5px;color:#808080;font-weight:bold;-webkit-text-stroke:0;font-family:'DejaVu Sans','Liberation Sans',sans-serif;letter-spacing:0.000px;transform:scaleX(0.9267);transform-origin:0 0;">Next step: Specify field mappings</span>
<div class="btn" style="left:775px;top:39px;width:48px;height:40px;background:linear-gradient(#fdfdfd,#f1f1f1 50%,#d8d8d8);"></div>
<svg style="left:783px;top:50px;" width="19" height="19" viewBox="0 0 19 19"><rect x="0" y="0" width="19" height="19" rx="3.500" fill="#7b87ae"/><path d="M9.500 2.500l2.200 4.600 5 .6-3.700 3.400 1 5-4.500-2.500-4.500 2.500 1-5-3.700-3.400 5-.6z" fill="#ffee70" stroke="#f8e040" stroke-width=".6"/></svg>
<svg style="left:811px;top:58px;" width="6" height="4" viewBox="0 0 6 4"><path d="M0 0h5.500l-2.750 3z" fill="#000"/></svg>
<div style="left:314px;top:88px;width:105px;height:20px;border:1px solid #d9d9d9;background:#f0f0f0;"></div>
<svg style="left:347px;top:90px;" width="13" height="16" viewBox="0 0 13 16"><path d="M0.500 0.500h7l4 4v10h-11z" fill="#fff" stroke="#8a8a8a"/><path d="M7.5 0.500v4h4" fill="none" stroke="#8a8a8a"/><text x="1.800" y="6.800" font-family="Liberation Sans,sans-serif" font-weight="bold" font-size="9" fill="#1e8cff">e</text><text x="1.300" y="13.300" font-family="Liberation Sans,sans-serif" font-size="6.500" fill="#222" textLength="9">pdf</text></svg>
<span id="t111" class="t" style="left:366.5px;top:91.99px;font-size:11px;line-height:15px;color:#000;font-weight:normal;letter-spacing:0.000px;transform:scaleX(0.8636);transform-origin:0 0;">PDF</span>
<div style="left:418px;top:88px;width:144px;height:20px;border:1px solid #d9d9d9;background:#f0f0f0;"></div>
<svg style="left:451px;top:90px;" width="16" height="16" viewBox="0 0 16 16"><g transform="translate(4,0)"><path d="M0.500 0.500h7l4 4v10h-11z" fill="#fff" stroke="#8a8a8a"/><path d="M7.5 0.500v4h4" fill="none" stroke="#8a8a8a"/><path d="M6.500 5.500h3.500M6.500 7.500h3.500M6.500 9.500h3.500M6.500 11.500h3.500" stroke="#9a9a9a" stroke-width=".9"/></g><rect x="0.600" y="4.100" width="8.800" height="8.800" fill="#d6e2f4" stroke="#2b5fb4" stroke-width="1.200"/><text x="1.200" y="11.400" font-family="Liberation Sans,sans-serif" font-weight="bold" font-size="8" fill="#1c3f80">W</text></svg>
<span id="t112" class="t" style="left:473px;top:91.99px;font-size:11px;line-height:15px;color:#000;font-weight:normal;letter-spacing:-0.331px;">Word (OLE)</span>
<div style="left:561px;top:88px;width:136px;height:20px;border:1px solid #d9d9d9;background:#f0f0f0;"></div>
<svg style="left:596px;top:90px;" width="14" height="17" viewBox="0 0 14 17"><path d="M0.500 0.500h8l3.500 3.500v12h-11.500z" fill="#fff" stroke="#b4b4b4"/><path d="M12 4v12h-11.500" fill="none" stroke="#000" stroke-width="1.200"/><path d="M2 3.500h4M2 5.500h4M2 7.500h3.500M2 9.500h3.500M2 11.500h3M2 13.500h3" stroke="#8c8c8c" stroke-width=".9"/><path d="M8.200 1.800h4.800l-3.300 3.900 3.300 .800-7.900 7.600 2.900-6.400h-2.900z" fill="#f58a00"/></svg>
<span id="t113" class="t" style="left:615.5px;top:91.99px;font-size:11px;line-height:15px;color:#000;font-weight:normal;letter-spacing:0.000px;transform:scaleX(0.9189);transform-origin:0 0;">SQL Script</span>
<div style="left:696px;top:88px;width:131px;height:20px;border:1px solid #d9d9d9;background:#f0f0f0;"></div>
<svg style="left:730px;top:90px;" width="16" height="16" viewBox="0 0 16 16"><defs><linearGradient id="dbg" x1="0" y1="0" x2="1" y2="0"><stop offset="0" stop-color="#ffe840"/><stop offset=".4" stop-color="#ffff70"/><stop offset="1" stop-color="#d9a400"/></linearGradient></defs><ellipse cx="7.700" cy="11.5" rx="6" ry="2.500" fill="url(#dbg)" stroke="#000" stroke-width="1.100"/><ellipse cx="7.700" cy="8.8" rx="6" ry="2.500" fill="url(#dbg)" stroke="#000" stroke-width="1.100"/><ellipse cx="7.700" cy="6.1" rx="6" ry="2.500" fill="url(#dbg)" stroke="#000" stroke-width="1.100"/><ellipse cx="7.700" cy="3.4" rx="6" ry="2.500" fill="url(#dbg)" stroke="#000" stroke-width="1.100"/><path d="M11.500 0h3.500v3.500z" fill="#f01010"/><path d="M0 11.500v3.500h3.500z" fill="#f01010"/></svg>
<span id="t114" class="t" style="left:750.5px;top:91.99px;font-size:11px;line-height:15px;color:#000;font-weight:normal;letter-spacing:-0.156px;">Database</span>
<div style="left:314px;top:107px;width:125px;height:20px;border:1px solid #d9d9d9;background:#f0f0f0;"></div>
<svg style="left:341px;top:109px;" width="13" height="16" viewBox="0 0 13 16"><path d="M0.500 0.500h7l4 4v10h-11z" fill="#fff" stroke="#8a8a8a"/><path d="M7.5 0.500v4h4" fill="none" stroke="#8a8a8a"/><path d="M2.500 4.500h4.500M2.500 6.500h7M2.500 8.500h7M2.500 10.500h7M2.500 12.500h7" stroke="#8c8c8c" stroke-width=".9"/></svg>
<span id="t115" class="t" style="left:361px;top:110.99px;font-size:11px;line-height:15px;color:#000;font-weight:normal;letter-spacing:-0.219px;">Text / CSV</span>
<div style="left:438px;top:107px;width:135px;height:20px;border:1px solid #d9d9d9;background:#f0f0f0;"></div>
<svg style="left:465px;top:109px;" width="16" height="16" viewBox="0 0 16 16"><g transform="translate(3.200,0)"><path d="M0.500 0.500h7.6l4 4v10.5h-11.6z" fill="#fff" stroke="#a2a2a2"/><path d="M8.1 0.500v4h4" fill="none" stroke="#a2a2a2"/></g><path d="M9.200 5.4h2.200M12.200 5.4h2.200" stroke="#3f9a64" stroke-width="1"/><path d="M9.200 7.4h2.200M12.200 7.4h2.200" stroke="#3f9a64" stroke-width="1"/><path d="M9.200 9.4h2.200M12.200 9.4h2.200" stroke="#8fa898" stroke-width="1"/><path d="M9.200 11.4h2.200M12.200 11.4h2.200" stroke="#8fa898" stroke-width="1"/><path d="M9.200 13.3h2.200M12.200 13.3h2.200" stroke="#8fa898" stroke-width="1"/><path d="M0 4.200l7-1.300v10.800l-7-1.100z" fill="#1e6b41"/><path d="M1.800 5.900l3.500 5M5.300 5.900l-3.500 5" stroke="#fff" stroke-width="1.400"/></svg>
<span id="t116" class="t" style="left:486.5px;top:110.99px;font-size:11px;line-height:15px;color:#000;font-weight:normal;letter-spacing:0.000px;transform:scaleX(0.9018);transform-origin:0 0;">Excel (XLSX)</span>
<div style="left:572px;top:107px;width:130px;height:20px;border:1px solid #d9d9d9;background:#f0f0f0;"></div>
<svg style="left:599px;top:109px;" width="16" height="16" viewBox="0 0 16 16"><g transform="translate(3.500,0.300)"><path d="M0.500 0.500h7l4 4v10h-11z" fill="#fff" stroke="#a2a2a2"/><path d="M7.5 0.500v4h4" fill="none" stroke="#a2a2a2"/><path d="M6.500 5.500h3.500M6.500 7.500h3.500M6.500 9.500h3.500M6.500 11.500h3.500" stroke="#217346" stroke-width=".9" opacity=".6"/></g><rect x="0.600" y="4.100" width="8.800" height="8.800" fill="#deeee3" stroke="#2a8652" stroke-width="1.200"/><path d="M2.300 5.800l5.400 5.400M7.700 5.800l-5.400 5.400" stroke="#1d6e3e" stroke-width="1.400"/></svg>
<span id="t117" class="t" style="left:620px;top:110.99px;font-size:11px;line-height:15px;color:#000;font-weight:normal;letter-spacing:0.000px;transform:scaleX(0.9181);transform-origin:0 0;">Excel (XML)</span>
<div style="left:701px;top:107px;width:126px;height:20px;border:1px solid #d9d9d9;background:#f0f0f0;"></div>
<svg style="left:728px;top:109px;" width="16" height="16" viewBox="0 0 16 16"><g transform="translate(3.500,0.300)"><path d="M0.500 0.500h7l4 4v10h-11z" fill="#fff" stroke="#a2a2a2"/><path d="M7.5 0.500v4h4" fill="none" stroke="#a2a2a2"/><path d="M6.500 5.500h3.500M6.500 7.500h3.500M6.500 9.500h3.500M6.500 11.500h3.500" stroke="#217346" stroke-width=".9" opacity=".6"/></g><rect x="0.600" y="4.100" width="8.800" height="8.800" fill="#deeee3" stroke="#2a8652" stroke-width="1.200"/><path d="M2.300 5.800l5.400 5.400M7.700 5.800l-5.400 5.400" stroke="#1d6e3e" stroke-width="1.400"/></svg>
<span id="t118" class="t" style="left:749.5px;top:110.99px;font-size:11px;line-height:15px;color:#000;font-weight:normal;letter-spacing:0.000px;transform:scaleX(0.9126);transform-origin:0 0;">Excel (XLS)</span>
<div style="left:314px;top:126px;width:107px;height:20px;border:1px solid #d9d9d9;background:#f0f0f0;"></div>
<svg style="left:328px;top:128px;" width="16" height="16" viewBox="0 0 16 16"><g transform="translate(3.500,0.300)"><path d="M0.500 0.500h7l4 4v10h-11z" fill="#fff" stroke="#a2a2a2"/><path d="M7.5 0.500v4h4" fill="none" stroke="#a2a2a2"/><path d="M6.500 5.500h3.500M6.500 7.500h3.500M6.500 9.500h3.500M6.500 11.500h3.500" stroke="#217346" stroke-width=".9" opacity=".6"/></g><rect x="0.600" y="4.100" width="8.800" height="8.800" fill="#deeee3" stroke="#2a8652" stroke-width="1.200"/><path d="M2.300 5.800l5.400 5.400M7.700 5.800l-5.400 5.400" stroke="#1d6e3e" stroke-width="1.400"/></svg>
<span id="t119" class="t" style="left:349.5px;top:129.99px;font-size:11px;line-height:15px;color:#000;font-weight:normal;letter-spacing:0.000px;transform:scaleX(0.9233);transform-origin:0 0;">Excel (OLE)</span>
<div style="left:420px;top:126px;width:77px;height:20px;border:1px solid #d9d9d9;background:#f0f0f0;"></div>
<svg style="left:436px;top:128px;" width="16" height="16" viewBox="0 0 16 16"><g transform="translate(3.200,0)"><path d="M0.500 0.500h7.6l4 4v10.5h-11.6z" fill="#fff" stroke="#a2a2a2"/><path d="M8.1 0.500v4h4" fill="none" stroke="#a2a2a2"/></g><path d="M9.300 10.500v-2.500h3.500M11.800 6.800l1.400 1.200-1.400 1.200" stroke="#7fb890" stroke-width="1" fill="none"/><path d="M14 10.500v2.500h-3.500M11.500 11.800l-1.400 1.200 1.400 1.200" stroke="#7fb890" stroke-width="1" fill="none"/><path d="M0 4.200l7-1.300v10.800l-7-1.100z" fill="#1e6b41"/><path d="M1.800 5.900l3.500 5M5.300 5.900l-3.500 5" stroke="#fff" stroke-width="1.400"/></svg>
<span id="t120" class="t" style="left:457.5px;top:129.99px;font-size:11px;line-height:15px;color:#000;font-weight:normal;letter-spacing:0.000px;transform:scaleX(0.8173);transform-origin:0 0;">SYLK</span>
<div style="left:577px;top:126px;width:70px;height:20px;border:1px solid #d9d9d9;background:#f0f0f0;"></div>
<svg style="left:592px;top:129px;" width="14" height="14" viewBox="0 0 15 15"><circle cx="7.500" cy="7.500" r="7.200" fill="#ea4335"/><path d="M7.500 7.500L1.300 3.900A7.200 7.200 0 0 0 7 14.700z" fill="#34a853"/><path d="M7.500 7.500L7 14.700A7.200 7.200 0 0 0 13.800 4z" fill="#fbbc05"/><path d="M7.500 4h6.300A7.200 7.200 0 0 0 1.300 3.900L4.400 9z" fill="#ea4335"/><circle cx="7.500" cy="7.500" r="3.400" fill="#fff"/><circle cx="7.500" cy="7.500" r="2.700" fill="#4285f4"/></svg>
<span id="t121" class="t" style="left:612.25px;top:129.99px;font-size:11px;line-height:15px;color:#000;font-weight:normal;letter-spacing:0.000px;transform:scaleX(0.8508);transform-origin:0 0;">XML</span>
<div style="left:646px;top:126px;width:112px;height:20px;border:1px solid #d9d9d9;background:#f0f0f0;"></div>
<svg style="left:662px;top:129px;" width="16" height="13" viewBox="0 0 16 13"><rect x="0" y="0" width="16" height="13" fill="#7a1b50"/><rect x="1" y="3" width="14" height="9" fill="#d4d0c8"/><rect x="1" y="3.10" width="14" height="1.150" fill="#ffd873"/><rect x="1" y="4.95" width="14" height="1.150" fill="#ffd873"/><rect x="1" y="6.80" width="14" height="1.150" fill="#ffd873"/><rect x="1" y="8.65" width="14" height="1.150" fill="#ffd873"/><rect x="1" y="10.50" width="14" height="1.150" fill="#ffd873"/><rect x="5.200" y="1" width="1" height="11" fill="#c9c9c9"/><rect x="10.200" y="1" width="1" height="11" fill="#c9c9c9"/></svg>
<span id="t122" class="t" style="left:684px;top:129.99px;font-size:11px;line-height:15px;color:#000;font-weight:normal;letter-spacing:0.000px;transform:scaleX(0.9123);transform-origin:0 0;">dBase (DBF)</span>
<div style="left:757px;top:126px;width:70px;height:20px;border:1px solid #d9d9d9;background:#f0f0f0;"></div>
<svg style="left:773px;top:128px;" width="16" height="16" viewBox="0 0 16 16"><g transform="translate(4,0)"><path d="M0.500 0.500h7l4 4v10h-11z" fill="#fff" stroke="#8a8a8a"/><path d="M7.5 0.500v4h4" fill="none" stroke="#8a8a8a"/><path d="M6.500 5.500h3.500M6.500 7.500h3.500M6.500 9.500h3.500M6.500 11.500h3.500" stroke="#9a9a9a" stroke-width=".9"/></g><rect x="0.600" y="4.100" width="8.800" height="8.800" fill="#d6e2f4" stroke="#2b5fb4" stroke-width="1.200"/><text x="1.200" y="11.400" font-family="Liberation Sans,sans-serif" font-weight="bold" font-size="8" fill="#1c3f80">W</text></svg>
<span id="t123" class="t" style="left:794.5px;top:129.99px;font-size:11px;line-height:15px;color:#000;font-weight:normal;letter-spacing:0.000px;transform:scaleX(0.8850);transform-origin:0 0;">RTF</span>
<div style="left:312px;top:146px;width:516px;height:402px;background:#fff;"></div>
<div style="left:315px;top:149px;width:512px;height:397px;background:#f0f0f0;border:1px solid;border-color:#a0a0a0 #fff #fff #a0a0a0;"></div>
<div style="left:316px;top:150px;width:510px;height:395px;border:1px solid;border-color:#696969 #e3e3e3 #e3e3e3 #696969;"></div>
<div style="left:495px;top:124px;width:83px;height:23px;background:#fff;border:1px solid #d9d9d9;border-bottom:none;"></div>
<svg style="left:513px;top:127px;" width="14" height="14" viewBox="0 0 15 15"><circle cx="7.500" cy="7.500" r="7.200" fill="#ea4335"/><path d="M7.500 7.500L1.300 3.900A7.200 7.200 0 0 0 7 14.700z" fill="#34a853"/><path d="M7.500 7.500L7 14.700A7.200 7.200 0 0 0 13.800 4z" fill="#fbbc05"/><path d="M7.500 4h6.300A7.200 7.200 0 0 0 1.300 3.900L4.400 9z" fill="#ea4335"/><circle cx="7.500" cy="7.500" r="3.400" fill="#fff"/><circle cx="7.500" cy="7.500" r="2.700" fill="#4285f4"/></svg>
<span id="t124" class="t" style="left:533.5px;top:127.99px;font-size:11px;line-height:15px;color:#000;font-weight:normal;letter-spacing:0.000px;transform:scaleX(0.8513);transform-origin:0 0;">HTML</span>
<div style="left:808px;top:151px;width:17px;height:393px;background:#f0f0f0;border-left:1px solid #fff;"></div>
<div style="left:809px;top:168px;width:15px;height:328px;background:#cdcdcd;"></div>
<svg style="left:808px;top:151px;" width="17" height="17" viewBox="0 0 17 17"><path d="M5.3 11.3l3.7-3.700 3.700 3.700" stroke="#505050" stroke-width="1.800" fill="none"/></svg>
<svg style="left:808px;top:527px;" width="17" height="17" viewBox="0 0 17 17"><path d="M5.3 6.300l3.700 3.700 3.700-3.700" stroke="#505050" stroke-width="1.800" fill="none"/></svg>
<span id="t125" class="t" style="left:324.5px;top:163.12px;font-size:10.5px;line-height:14.5px;color:#000;font-weight:bold;-webkit-text-stroke:0;font-family:'DejaVu Sans','Liberation Sans',sans-serif;letter-spacing:0.000px;transform:scaleX(0.8754);transform-origin:0 0;">File:</span>
<div style="left:429px;top:159px;width:349px;height:22px;background:#fff;border:1px solid #7a7a7a;"></div>
<span id="t126" class="t" style="left:432.5px;top:162.69px;font-size:11px;line-height:15px;color:#000;font-weight:normal;letter-spacing:-0.379px;">C:\MyData\ADDRESSEE.html</span>
<svg style="left:762px;top:164px;" width="12" height="12" viewBox="0 0 12 12"><path d="M1.5 3.5l4.5 4.5 4.5-4.5" stroke="#505050" stroke-width="1" fill="none"/></svg>
<div class="btn" style="left:779px;top:159px;width:21px;height:22px;"></div>
<span id="t127" class="t" style="left:783.5px;top:162.69px;font-size:11px;line-height:15px;color:#000;font-weight:normal;letter-spacing:1px;">...</span>
<div style="left:325px;top:197px;width:475px;height:55px;border:1px solid #dcdcdc;"></div>
<div style="left:331px;top:190px;width:47px;height:14px;background:#f0f0f0;"></div>
<span id="t128" class="t" style="left:332.5px;top:190.69px;font-size:11px;line-height:15px;color:#000;font-weight:normal;letter-spacing:-0.092px;">Template</span>
<svg style="left:333px;top:209px;" width="13" height="13" viewBox="0 0 13 13"><circle cx="6.500" cy="6.500" r="6" fill="#fff" stroke="#333" stroke-width="1"/><circle cx="6.500" cy="6.500" r="3.200" fill="#333"/></svg>
<span id="t129" class="t" style="left:348.5px;top:208.99px;font-size:11px;line-height:15px;color:#000;font-weight:normal;letter-spacing:-0.226px;">(None)</span>
<svg style="left:333px;top:228px;" width="13" height="13" viewBox="0 0 13 13"><circle cx="6.500" cy="6.500" r="6" fill="#fff" stroke="#333" stroke-width="1"/></svg>
<span id="t130" class="t" style="left:348.5px;top:227.99px;font-size:11px;line-height:15px;color:#000;font-weight:normal;letter-spacing:-0.063px;">Template file:</span>
<div style="left:452px;top:224px;width:318px;height:22px;background:#fff;border:1px solid #d9d9d9;"></div>
<div style="left:455px;top:227px;width:296px;height:16px;background:#f0f0f0;"></div>
<svg style="left:754px;top:229px;" width="12" height="12" viewBox="0 0 12 12"><path d="M1.5 3.5l4.5 4.5 4.5-4.5" stroke="#a0a0a0" stroke-width="1.1" fill="none"/></svg>
<div class="btn" style="left:771px;top:224px;width:21px;height:22px;border-color:#adadad;"></div>
<span id="t131" class="t" style="left:775.5px;top:227.69px;font-size:11px;line-height:15px;color:#555;font-weight:normal;letter-spacing:1px;">...</span>
<span id="t132" class="t" style="left:324.5px;top:267.79px;font-size:11px;line-height:15px;color:#000;font-weight:normal;letter-spacing:-0.098px;">Document title:</span>
<div style="left:449px;top:264px;width:129px;height:21px;background:#fff;border:1px solid #7a7a7a;"></div>
<span id="t133" class="t" style="left:451.5px;top:267.79px;font-size:11px;line-height:15px;color:#000;font-weight:normal;letter-spacing:0.000px;transform:scaleX(0.8547);transform-origin:0 0;">ADDRESSEE</span>
<span id="t134" class="t" style="left:601.5px;top:267.79px;font-size:11px;line-height:15px;color:#a0a0a0;font-weight:normal;letter-spacing:-0.258px;">Step No:</span>
<div style="left:752px;top:264px;width:48px;height:21px;background:#fff;border:1px solid #d0d0d0;"></div>
<span id="t135" class="t" style="left:324.5px;top:300.19px;font-size:11px;line-height:15px;color:#000;font-weight:normal;letter-spacing:-0.366px;">Encoding:</span>
<div style="left:449px;top:296px;width:129px;height:21px;background:#fff;border:1px solid #0078d7;"></div>
<div style="left:451.5px;top:300px;width:30px;height:13px;background:#0078d7;"></div>
<span id="t136" class="t" style="left:452px;top:299.19px;font-size:11px;line-height:15px;color:#fff;font-weight:normal;letter-spacing:0.000px;transform:scaleX(0.9303);transform-origin:0 0;">UTF-8</span>
<svg style="left:563px;top:301px;" width="12" height="12" viewBox="0 0 12 12"><path d="M1.5 3.5l4.5 4.5 4.5-4.5" stroke="#505050" stroke-width="1" fill="none"/></svg>
<svg style="left:602px;top:299px;" width="13" height="13" viewBox="0 0 13 13"><rect x="0.500" y="0.500" width="12" height="12" fill="#fff" stroke="#333"/><path d="M2.700 6.500l2.800 2.800 5.200-5.800" stroke="#3c3c3c" stroke-width="1.100" fill="none"/></svg>
<span id="t137" class="t" style="left:617.5px;top:299.19px;font-size:11px;line-height:15px;color:#000;font-weight:normal;letter-spacing:-0.213px;">Include Memo fields</span>
<svg style="left:602px;top:320px;" width="13" height="13" viewBox="0 0 13 13"><rect x="0.500" y="0.500" width="12" height="12" fill="#fff" stroke="#333"/><path d="M2.700 6.500l2.800 2.800 5.200-5.800" stroke="#3c3c3c" stroke-width="1.100" fill="none"/></svg>
<span id="t138" class="t" style="left:617.5px;top:320.19px;font-size:11px;line-height:15px;color:#000;font-weight:normal;letter-spacing:-0.267px;">Include column names</span>
<svg style="left:602px;top:341px;" width="13" height="13" viewBox="0 0 13 13"><rect x="0.500" y="0.500" width="12" height="12" fill="#fff" stroke="#333"/><path d="M2.700 6.500l2.800 2.800 5.200-5.800" stroke="#3c3c3c" stroke-width="1.100" fill="none"/></svg>
<span id="t139" class="t" style="left:617.5px;top:341.19px;font-size:11px;line-height:15px;color:#000;font-weight:normal;letter-spacing:-0.231px;">Include images</span>
<span id="t140" class="t" style="left:324.5px;top:333.19px;font-size:11px;line-height:15px;color:#000;font-weight:normal;letter-spacing:0.012px;">Alternate row color:</span>
<div style="left:449px;top:329px;width:107px;height:22px;background:#fff;border:1px solid #7a7a7a;"></div>
<div style="left:454.5px;top:334.5px;width:15px;height:11px;background:#c0dcc0;border:1px solid #404040;"></div>
<span id="t141" class="t" style="left:476px;top:332.69px;font-size:11px;line-height:15px;color:#000;font-weight:normal;letter-spacing:-0.357px;">#C0DCC0</span>
<svg style="left:541px;top:334px;" width="12" height="12" viewBox="0 0 12 12"><path d="M1.5 3.5l4.5 4.5 4.5-4.5" stroke="#505050" stroke-width="1" fill="none"/></svg>
<div class="btn" style="left:557px;top:329px;width:21px;height:22px;"></div>
<span id="t142" class="t" style="left:561.5px;top:332.69px;font-size:11px;line-height:15px;color:#000;font-weight:normal;letter-spacing:1px;">...</span>
<span id="t143" class="t" style="left:324.5px;top:366.69px;font-size:11px;line-height:15px;color:#000;font-weight:normal;letter-spacing:0.007px;">Target image format:</span>
<div style="left:486px;top:363px;width:92px;height:21px;background:#e1e1e1;border:1px solid #adadad;"></div>
<span id="t144" class="t" style="left:489.5px;top:366.69px;font-size:11px;line-height:15px;color:#000;font-weight:normal;letter-spacing:0.000px;transform:scaleX(0.8388);transform-origin:0 0;">PNG</span>
<svg style="left:563px;top:368px;" width="12" height="12" viewBox="0 0 12 12"><path d="M1.5 3.5l4.5 4.5 4.5-4.5" stroke="#505050" stroke-width="1" fill="none"/></svg>
<span id="t145" class="t" style="left:601.5px;top:371.89px;font-size:11px;line-height:15px;color:#000;font-weight:normal;letter-spacing:-0.243px;">Line break:</span>
<div style="left:687px;top:368px;width:113px;height:21px;background:#e1e1e1;border:1px solid #adadad;"></div>
<span id="t146" class="t" style="left:690.5px;top:371.89px;font-size:11px;line-height:15px;color:#000;font-weight:normal;letter-spacing:-0.225px;">Windows (CR+LF)</span>
<svg style="left:785px;top:373px;" width="12" height="12" viewBox="0 0 12 12"><path d="M1.5 3.5l4.5 4.5 4.5-4.5" stroke="#505050" stroke-width="1" fill="none"/></svg>
<div style="left:325px;top:394px;width:13px;height:13px;background:#fff;border:1px solid #ccc;"></div>
<span id="t147" class="t" style="left:341px;top:393.19px;font-size:11px;line-height:15px;color:#838383;font-weight:normal;letter-spacing:-0.093px;">Create index file</span>
<div style="left:325px;top:427px;width:475px;height:16px;border:1px solid #dcdcdc;"></div>
<div style="left:331px;top:421px;width:64.5px;height:12px;background:#f0f0f0;"></div>
<span id="t148" class="t" style="left:332.5px;top:419.69px;font-size:11px;line-height:15px;color:#000;font-weight:normal;letter-spacing:-0.187px;">Export mode</span>
<div style="left:657.75px;top:421px;width:105px;height:12px;background:#f0f0f0;"></div>
<span id="t149" class="t" style="right:72.25px;top:419.99px;font-size:11px;line-height:15px;color:#000;font-weight:bold;-webkit-text-stroke:0;font-family:'DejaVu Sans','Liberation Sans',sans-serif;letter-spacing:-0.391px;">[Replace+Insert]</span>
<div style="left:780px;top:420px;width:20px;height:20px;background:#fff;border:1px solid #1a1a8c;border-radius:3px;"></div>
<svg style="left:784px;top:425px;" width="14" height="11" viewBox="0 0 14 11"><path d="M2.200 1.700l3.500 3.800-3.500 3.800M7.200 1.700l3.500 3.800-3.500 3.800" stroke="#00008b" stroke-width="2" fill="none"/></svg>
<div style="left:325px;top:463px;width:475px;height:16px;border:1px solid #dcdcdc;"></div>
<div style="left:331px;top:457px;width:68.5px;height:12px;background:#f0f0f0;"></div>
<span id="t150" class="t" style="left:332.5px;top:455.69px;font-size:11px;line-height:15px;color:#000;font-weight:normal;letter-spacing:-0.197px;">Record range</span>
<div style="left:732.75px;top:457px;width:30px;height:12px;background:#f0f0f0;"></div>
<span id="t151" class="t" style="right:72.25px;top:455.99px;font-size:11px;line-height:15px;color:#000;font-weight:bold;-webkit-text-stroke:0;font-family:'DejaVu Sans','Liberation Sans',sans-serif;letter-spacing:0.000px;transform:scaleX(0.9187);transform-origin:100% 0;">[All]</span>
<div style="left:780px;top:456px;width:20px;height:20px;background:#fff;border:1px solid #1a1a8c;border-radius:3px;"></div>
<svg style="left:784px;top:461px;" width="14" height="11" viewBox="0 0 14 11"><path d="M2.200 1.700l3.500 3.800-3.500 3.800M7.200 1.700l3.500 3.800-3.500 3.800" stroke="#00008b" stroke-width="2" fill="none"/></svg>
<div style="left:325px;top:499px;width:475px;height:16px;border:1px solid #dcdcdc;"></div>
<div style="left:331px;top:493px;width:69.5px;height:12px;background:#f0f0f0;"></div>
<span id="t152" class="t" style="left:332.5px;top:491.69px;font-size:11px;line-height:15px;color:#000;font-weight:normal;letter-spacing:-0.327px;">Column range</span>
<div style="left:732.75px;top:493px;width:30px;height:12px;background:#f0f0f0;"></div>
<span id="t153" class="t" style="right:72.25px;top:491.99px;font-size:11px;line-height:15px;color:#000;font-weight:bold;-webkit-text-stroke:0;font-family:'DejaVu Sans','Liberation Sans',sans-serif;letter-spacing:0.000px;transform:scaleX(0.9187);transform-origin:100% 0;">[All]</span>
<div style="left:780px;top:492px;width:20px;height:20px;background:#fff;border:1px solid #1a1a8c;border-radius:3px;"></div>
<svg style="left:784px;top:497px;" width="14" height="11" viewBox="0 0 14 11"><path d="M2.200 1.700l3.500 3.800-3.500 3.800M7.200 1.700l3.500 3.800-3.500 3.800" stroke="#00008b" stroke-width="2" fill="none"/></svg>
<div style="left:325px;top:535px;width:475px;height:10px;border:1px solid #dcdcdc;border-bottom:none;"></div>
<div style="left:331px;top:529px;width:148.5px;height:12px;background:#f0f0f0;"></div>
<span id="t154" class="t" style="left:332.5px;top:527.69px;font-size:11px;line-height:15px;color:#000;font-weight:normal;letter-spacing:-0.036px;">Source records per target row</span>
<div style="left:739.75px;top:529px;width:23px;height:12px;background:#f0f0f0;"></div>
<span id="t155" class="t" style="right:72.25px;top:527.99px;font-size:11px;line-height:15px;color:#000;font-weight:bold;-webkit-text-stroke:0;font-family:'DejaVu Sans','Liberation Sans',sans-serif;letter-spacing:-0.359px;">[1]</span>
<div style="left:780px;top:528px;width:20px;height:16px;background:#fff;border:1px solid #1a1a8c;border-radius:3px;border-bottom:none;border-radius:3px 3px 0 0;"></div>
<svg style="left:784px;top:533px;" width="14" height="11" viewBox="0 0 14 11"><path d="M2.200 1.700l3.500 3.800-3.500 3.800M7.200 1.700l3.500 3.800-3.500 3.800" stroke="#00008b" stroke-width="2" fill="none"/></svg>
<div style="left:311px;top:548px;width:519px;height:76px;background:#f0f0f0;"></div>
<svg style="left:319px;top:560px;" width="13" height="13" viewBox="0 0 13 13"><rect x="0.500" y="0.500" width="12" height="12" fill="#fff" stroke="#333"/></svg>
<span id="t156" class="t" style="left:334.5px;top:559.69px;font-size:11px;line-height:15px;color:#000;font-weight:normal;letter-spacing:-0.107px;">Close this window after clicking Export</span>
<svg style="left:579px;top:560px;" width="13" height="13" viewBox="0 0 13 13"><rect x="0.500" y="0.500" width="12" height="12" fill="#fff" stroke="#333"/><path d="M2.700 6.500l2.800 2.800 5.200-5.800" stroke="#3c3c3c" stroke-width="1.100" fill="none"/></svg>
<span id="t157" class="t" style="left:594.5px;top:559.69px;font-size:11px;line-height:15px;color:#000;font-weight:normal;letter-spacing:0.030px;">Open target after successful exporting</span>
<div class="pbtn" style="left:344px;top:591px;width:75px;height:25px;border-color:#bcbcbc;background:#efefef;"></div>
<div class="pbtn" style="left:429px;top:591px;width:75px;height:25px;border-color:#505050;"></div>
<div class="pbtn" style="left:514px;top:591px;width:75px;height:25px;"></div>
<div class="pbtn" style="left:599px;top:591px;width:114px;height:25px;"></div>
<div class="pbtn" style="left:723px;top:591px;width:75px;height:25px;"></div>
<span id="t158" class="t" style="left:369.5px;top:596.69px;font-size:11px;line-height:15px;color:#838383;font-weight:normal;letter-spacing:0.000px;transform:scaleX(0.8991);transform-origin:0 0;"><u>B</u>ack</span>
<span id="t159" class="t" style="left:452.75px;top:597.12px;font-size:10.5px;line-height:14.5px;color:#000;font-weight:bold;-webkit-text-stroke:0;font-family:'DejaVu Sans','Liberation Sans',sans-serif;letter-spacing:0.000px;transform:scaleX(0.9109);transform-origin:0 0;"><u>N</u>ext</span>
<span id="t160" class="t" style="left:534.5px;top:596.69px;font-size:11px;line-height:15px;color:#000;font-weight:normal;letter-spacing:0.000px;transform:scaleX(0.9270);transform-origin:0 0;">Cancel</span>
<svg style="left:629px;top:596px;" width="15" height="15" viewBox="0 0 15 15"><rect x="0.95" y="2.90" width="3" height="3" fill="#0a88ff"/><rect x="5.00" y="2.90" width="3" height="3" fill="#0a88ff"/><rect x="0.95" y="7.00" width="3" height="3" fill="#0a88ff"/><rect x="5.00" y="7.00" width="3" height="3" fill="#0a88ff"/><rect x="9.05" y="7.00" width="3" height="3" fill="#0a88ff"/><rect x="0.95" y="11.10" width="3" height="3" fill="#0a88ff"/><rect x="5.00" y="11.10" width="3" height="3" fill="#0a88ff"/><rect x="9.05" y="11.10" width="3" height="3" fill="#0a88ff"/><rect x="1.900" y="0.800" width="3.100" height="1.100" fill="#0a88ff"/><rect x="6" y="0.800" width="3" height="1.100" fill="#0a88ff"/><rect x="13" y="6.100" width="1" height="2.500" fill="#0a88ff"/><rect x="13" y="10.200" width="1" height="2.700" fill="#0a88ff"/><path d="M9 0h6v5.400h-2.300l-2.300 1.400-2.400-2.400 1-1.900z" fill="#e4650e"/></svg>
<span id="t161" class="t" style="left:652.5px;top:596.69px;font-size:11px;line-height:15px;color:#000;font-weight:normal;letter-spacing:-0.061px;">Export</span>
<span id="t162" class="t" style="left:749.75px;top:596.69px;font-size:11px;line-height:15px;color:#000;font-weight:normal;letter-spacing:0.000px;transform:scaleX(0.9055);transform-origin:0 0;"><u>H</u>elp</span>
<svg style="left:818px;top:611px;" width="12" height="12" viewBox="0 0 12 12"><path d="M12 1L1 12M12 4L4 12M12 7L7 12M12 10L10 12" stroke="#a6a6a6" stroke-width="1"/><path d="M12 2L2 12M12 5L5 12M12 8L8 12" stroke="#fff" stroke-width=".8"/></svg>
</div>
</body></html>
